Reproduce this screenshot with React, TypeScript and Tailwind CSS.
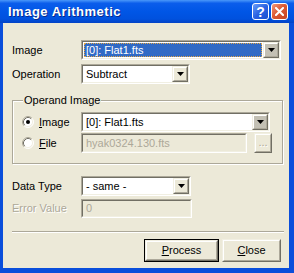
import React from 'react';

const font = "font-['Liberation_Sans',Arial,sans-serif]";

function Sunken({ className = '', inner = 'bg-white', children }: { className?: string; inner?: string; children?: React.ReactNode }) {
  return (
    <div className={`border border-t-[#ACA899] border-l-[#ACA899] border-b-white border-r-white ${className}`}>
      <div className={`flex h-full w-full items-center border border-t-[#716F64] border-l-[#716F64] border-b-[#F1EFE2] border-r-[#F1EFE2] ${inner}`}>
        {children}
      </div>
    </div>
  );
}

function Raised({ className = '', face = 'bg-[#ECE9D8]', children }: { className?: string; face?: string; children?: React.ReactNode }) {
  return (
    <div className={`border border-t-[#F1EFE2] border-l-[#F1EFE2] border-b-[#716F64] border-r-[#716F64] ${className}`}>
      <div className={`flex h-full w-full items-center justify-center border border-t-white border-l-white border-b-[#ACA899] border-r-[#ACA899] ${face}`}>
        {children}
      </div>
    </div>
  );
}

function Arrow() {
  return (
    <svg width="7" height="4" viewBox="0 0 7 4">
      <path d="M0 0h7L3.5 4z" fill="#000" />
    </svg>
  );
}

function Combo({ width, text, selected = false, dark = false }: { width: string; text: string; selected?: boolean; dark?: boolean }) {
  return (
    <Sunken className={`${width} h-[20px]`}>
      {selected ? (
        <div className="m-[1px] flex h-[14px] flex-1 items-center border border-dotted border-[#E2A544] bg-[#316AC5] pl-[1px] text-white">
          {text}
        </div>
      ) : (
        <div className="flex-1 pl-[3px] text-black">{text}</div>
      )}
      <Raised className="h-full w-[16px]" face={dark ? 'bg-[#C3C0B4]' : 'bg-[#ECE9D8]'}>
        <Arrow />
      </Raised>
    </Sunken>
  );
}

function Radio({ checked }: { checked: boolean }) {
  return (
    <svg width="12" height="12" viewBox="0 0 12 12">
      <circle cx="6" cy="6" r="5" fill="#fff" />
      <path d="M2.11 9.89A5.5 5.5 0 0 1 9.89 2.11" stroke="#ACA899" fill="none" />
      <path d="M9.89 2.11A5.5 5.5 0 0 1 2.11 9.89" stroke="#fff" fill="none" />
      <path d="M2.82 9.18A4.5 4.5 0 0 1 9.18 2.82" stroke="#716F64" fill="none" />
      <path d="M9.18 2.82A4.5 4.5 0 0 1 2.82 9.18" stroke="#F1EFE2" fill="none" />
      {checked && <circle cx="6" cy="6" r="2" fill="#000" />}
    </svg>
  );
}

function TitleButton({ kind }: { kind: 'help' | 'close' }) {
  const bg =
    kind === 'help'
      ? 'bg-[linear-gradient(135deg,#6A9EF8_0%,#2A63E2_50%,#1C4FD0_100%)]'
      : 'bg-[linear-gradient(135deg,#F09A7C_0%,#DC5A34_45%,#C44422_100%)]';
  return (
    <div className={`flex h-[17px] w-[17px] items-center justify-center rounded-[3px] border border-white ${bg}`}>
      {kind === 'help' ? (
        <span className="text-[14px] font-bold leading-none text-white font-['Liberation_Sans',Arial,sans-serif]">?</span>
      ) : (
        <svg width="9" height="9" viewBox="0 0 9 9">
          <path d="M1 1L8 8M8 1L1 8" stroke="#fff" strokeWidth="2" strokeLinecap="square" />
        </svg>
      )}
    </div>
  );
}

export default function App() {
  return (
    <div className={`h-[273px] w-[294px] bg-[#0A4EDB] text-[11px] leading-[13px] ${font}`}>
      {/* title bar */}
      <div className="flex h-[23px] items-center bg-[linear-gradient(180deg,#4A98FA_0%,#0B5DEB_14%,#0056E6_50%,#0051DE_82%,#0343C6_100%)] pl-[8px] pr-[6px]">
        <span className="flex-1 text-[13px] font-bold tracking-[0.5px] text-white [text-shadow:1px_1px_0_#0A2A8C]">
          Image Arithmetic
        </span>
        <div className="flex gap-[2px]">
          <TitleButton kind="help" />
          <TitleButton kind="close" />
        </div>
      </div>

      {/* body */}
      <div className="ml-[3px] mr-[5px] flex h-[245px] flex-col bg-[#ECE9D8] pl-[9px] pr-[6px] pt-[17px] text-black">
        <div className="flex items-center">
          <span className="w-[69px]">Image</span>
          <Combo width="w-[200px]" text="[0]: Flat1.fts" selected dark />
        </div>
        <div className="mt-[4px] flex items-center">
          <span className="w-[69px]">Operation</span>
          <Combo width="w-[109px]" text="Subtract" />
        </div>

        {/* operand group */}
        <div className="relative mt-[16px] h-[64px] w-[271px] border border-[#ACA899] px-[9px] pt-[11px] shadow-[1px_1px_0_#fff,inset_1px_1px_0_#fff]">
          <span className="absolute left-[10px] top-[-7px] bg-[#ECE9D8] px-[1px]">Operand Image</span>
          <div className="flex h-[20px] items-center">
            <div className="flex w-[59px] items-center gap-[5px]">
              <Radio checked />
              <span>
                <span className="underline">I</span>mage
              </span>
            </div>
            <Combo width="w-[189px]" text="[0]: Flat1.fts" dark />
          </div>
          <div className="mt-[1px] flex h-[20px] items-center">
            <div className="flex w-[59px] items-center gap-[5px]">
              <Radio checked={false} />
              <span>
                <span className="underline">F</span>ile
              </span>
            </div>
            <Sunken className="h-[20px] w-[166px]" inner="bg-[#ECE9D8]">
              <span className="pl-[3px] text-[#ACA899]">hyak0324.130.fts</span>
            </Sunken>
            <Raised className="ml-[7px] h-[20px] w-[18px]">
              <span className="pb-[2px] text-[#ACA899] [text-shadow:1px_1px_0_#fff]">...</span>
            </Raised>
          </div>
        </div>

        <div className="mt-[12px] flex items-center">
          <span className="w-[69px]">Data Type</span>
          <Combo width="w-[110px]" text="- same -" />
        </div>
        <div className="mt-[3px] flex items-center">
          <span className="w-[69px] text-[#ACA899] [text-shadow:1px_1px_0_#fff]">Error Value</span>
          <Sunken className="h-[19px] w-[111px]" inner="bg-[#ECE9D8]">
            <span className="pl-[3px] text-[#ACA899]">0</span>
          </Sunken>
        </div>

        <div className="mt-[13px] h-[2px] w-[272px] border-t border-b border-t-[#ACA899] border-b-white" />

        <div className="mt-[6px] flex justify-end gap-[3px] pr-[2px]">
          <div className="h-[23px] w-[75px] border border-black">
            <Raised className="h-full w-full">
              <span>
                <span className="underline">P</span>rocess
              </span>
            </Raised>
          </div>
          <Raised className="h-[23px] w-[59px]">
            <span>
              <span className="underline">C</span>lose
            </span>
          </Raised>
        </div>
      </div>
    </div>
  );
}
